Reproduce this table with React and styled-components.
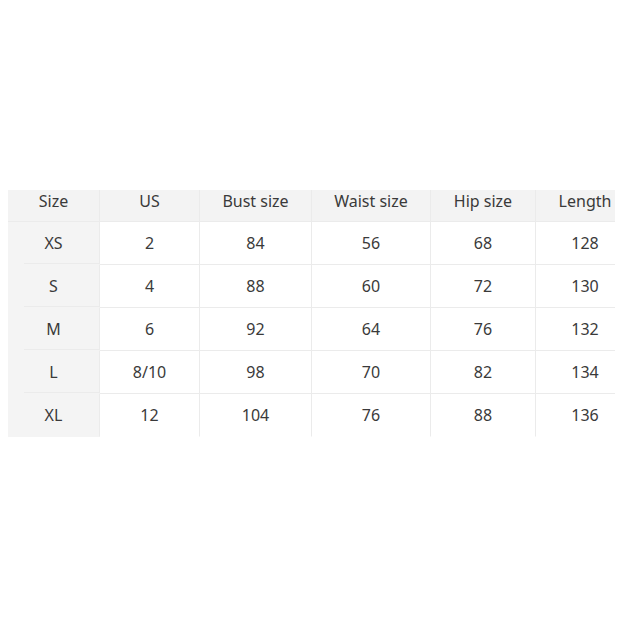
import React from "react";
import styled, { createGlobalStyle } from "styled-components";

const GlobalStyle = createGlobalStyle`
  html, body {
    margin: 0;
    padding: 0;
    background: #fff;
  }
  body {
    font-family: "Noto Sans", "Open Sans", Arial, sans-serif;
    color: #3a3a3a;
  }
`;

const Page = styled.div`
  width: 624px;
  height: 624px;
  padding: 190px 0 0 8px;
  box-sizing: border-box;
`;

const Clip = styled.div`
  width: 607px;
  overflow: hidden;
`;

const Grid = styled.div`
  display: grid;
  grid-template-columns: 92px 100px 112px 119px 105px 98px;
  width: 626px;
`;

const Cell = styled.div`
  display: flex;
  align-items: center;
  justify-content: center;
  box-sizing: border-box;
  font-size: 16px;
  line-height: 1;
  height: ${p => (p.$head ? "32px" : "43px")};
  padding-bottom: ${p => (p.$head ? "9px" : "0")};
  background: ${p => (p.$head ? "#f3f3f3" : "#fff")};
  border-right: 1px solid #ebebeb;
  border-bottom: 1px solid ${p => (p.$last ? "transparent" : "#ebebeb")};

  &:nth-child(6n) {
    border-right: none;
  }
`;

const FirstCell = styled(Cell)`
  background: ${p =>
    p.$head
      ? "#f3f3f3"
      : p.$last
      ? "#f4f4f4"
      : "linear-gradient(#ebebeb, #ebebeb) no-repeat right 0 bottom 0 / calc(100% - 16px) 1px, #f4f4f4"};
  border-bottom: ${p => (p.$head ? "1px solid #ebebeb" : "1px solid transparent")};
`;

const header = ["Size", "US", "Bust size", "Waist size", "Hip size", "Length"];
const rows = [
  ["XS", "2", "84", "56", "68", "128"],
  ["S", "4", "88", "60", "72", "130"],
  ["M", "6", "92", "64", "76", "132"],
  ["L", "8/10", "98", "70", "82", "134"],
  ["XL", "12", "104", "76", "88", "136"],
];

export default function App() {
  return (
    <Page>
      <GlobalStyle />
      <Clip>
        <Grid>
          {header.map((h, i) =>
            i === 0 ? (
              <FirstCell key={h} $head>
                {h}
              </FirstCell>
            ) : (
              <Cell key={h} $head>
                {h}
              </Cell>
            )
          )}
          {rows.map((r, ri) =>
            r.map((v, ci) => {
              const last = ri === rows.length - 1;
              return ci === 0 ? (
                <FirstCell key={`${ri}-${ci}`} $last={last}>
                  {v}
                </FirstCell>
              ) : (
                <Cell key={`${ri}-${ci}`} $last={last}>
                  {v}
                </Cell>
              );
            })
          )}
        </Grid>
      </Clip>
    </Page>
  );
}
